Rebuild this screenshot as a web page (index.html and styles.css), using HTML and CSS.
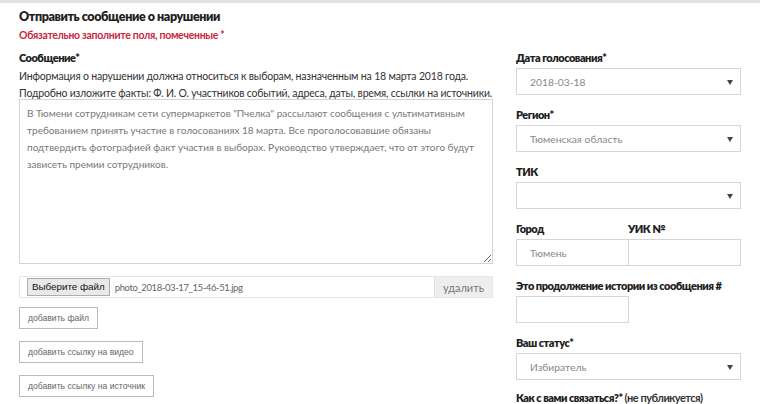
FILE: index.html
```html
<!DOCTYPE html>
<html lang="ru">
<head>
  <meta charset="UTF-8">
  <title>Отправить сообщение о нарушении</title>
  <link rel="stylesheet" href="styles.css">
</head>
<body>

<div class="page">
  <h1>Отправить сообщение о нарушении</h1>
  <p class="required-note">Обязательно заполните поля, помеченные *</p>

  <div class="form">
    <div class="col-main">
      <label class="label">Сообщение*</label>
      <p class="hint">Информация о нарушении должна относиться к выборам, назначенным на 18 марта 2018 года.<br>Подробно изложите факты: Ф. И. О. участников событий, адреса, даты, время, ссылки на источники.</p>
      <textarea class="message">В Тюмени сотрудникам сети супермаркетов "Пчелка" рассылают сообщения с ультимативным
требованием принять участие в голосованиях 18 марта. Все проголосовавшие обязаны
подтвердить фотографией факт участия в выборах. Руководство утверждает, что от этого будут
зависеть премии сотрудников.</textarea>

      <div class="file-row">
        <div class="file-pick">
          <span class="file-btn">Выберите файл</span>
          <span class="file-name">photo_2018-03-17_15-46-51.jpg</span>
        </div>
        <span class="file-del">удалить</span>
      </div>

      <div class="actions">
        <button class="btn">добавить файл</button>
        <button class="btn">добавить ссылку на видео</button>
        <button class="btn">добавить ссылку на источник</button>
      </div>
    </div>

    <div class="col-side">
      <div class="field">
        <label class="label">Дата голосования*</label>
        <div class="select">2018-03-18</div>
      </div>
      <div class="field">
        <label class="label">Регион*</label>
        <div class="select">Тюменская область</div>
      </div>
      <div class="field">
        <label class="label">ТИК</label>
        <div class="select"></div>
      </div>
      <div class="field pair">
        <div>
          <label class="label">Город</label>
          <div class="input">Тюмень</div>
        </div>
        <div>
          <label class="label">УИК №</label>
          <div class="input"></div>
        </div>
      </div>
      <div class="field">
        <label class="label">Это продолжение истории из сообщения #</label>
        <div class="input short"></div>
      </div>
      <div class="field">
        <label class="label">Ваш статус*</label>
        <div class="select">Избиратель</div>
      </div>
      <div class="field last">
        <label class="label">Как с вами связаться?* <span class="normal">(не публикуется)</span></label>
      </div>
    </div>
  </div>
</div>

</body>
</html>
```

FILE: styles.css
```css
body {
  margin: 0;
  padding: 0;
  background-color: #fff;
  font-family: "Lato", "Open Sans", sans-serif;
  color: #333;
  overflow: hidden;
}
.page {
  border-top: 3px solid #e2e2e2;
  padding: 6px 19px 0 19px;
}
h1 {
  font-size: 12.5px;
  font-weight: 800;
  letter-spacing: -0.4px;
  color: #1e1e1e;
  margin: 0;
  line-height: 16px;
}
.required-note {
  color: #c8283e;
  font-size: 10.5px;
  font-weight: bold;
  letter-spacing: -0.3px;
  margin: 2px 0 0 0;
  line-height: 16px;
}
.form {
  display: flex;
  gap: 23px;
  margin-top: 7px;
}
.col-main {
  width: 474px;
}
.col-side {
  width: 225px;
}
.label {
  display: block;
  font-size: 11px;
  font-weight: 800;
  letter-spacing: -0.5px;
  color: #1e1e1e;
  line-height: 16px;
  margin-bottom: 2px;
}
.label .normal {
  font-weight: bold;
  color: #333;
}
.hint {
  font-size: 10.5px;
  letter-spacing: -0.18px;
  line-height: 17px;
  margin: 1px 0 -3px 0;
  color: #333;
  white-space: nowrap;
}
.message {
  display: block;
  box-sizing: border-box;
  width: 474px;
  height: 165px;
  margin: 0;
  padding: 5px 7px;
  border: 1px solid #d4d4d4;
  font-family: inherit;
  font-size: 10px;
  line-height: 17px;
  color: #777;
  resize: vertical;
  white-space: pre;
  overflow: hidden;
}
.file-row {
  display: flex;
  margin-top: 12px;
  height: 22px;
  border: 1px solid #e6e6e6;
  box-sizing: border-box;
}
.file-pick {
  flex: 1;
  display: flex;
  align-items: center;
  padding-left: 7px;
}
.file-btn {
  font-family: "Liberation Sans", Arial, sans-serif;
  font-size: 9.8px;
  color: #111;
  background: #e9e9e9;
  border: 1px solid #adadad;
  padding: 2px 4px;
  line-height: 12px;
}
.file-name {
  font-size: 9.5px;
  letter-spacing: -0.4px;
  color: #666;
  margin-left: 5px;
}
.file-del {
  width: 57px;
  background: #eeeeee;
  color: #777;
  font-size: 11px;
  display: flex;
  align-items: center;
  justify-content: center;
  border-left: 1px solid #e0e0e0;
}
.actions {
  display: flex;
  flex-direction: column;
  align-items: flex-start;
  gap: 12px;
  margin-top: 9px;
}
.btn {
  background: #fff;
  border: 1px solid #bbbbbb;
  height: 22px;
  padding: 0 8px;
  font-family: "Liberation Sans", Tahoma, sans-serif;
  font-size: 8.6px;
  color: #666;
}
.field {
  margin-bottom: 12px;
}
.field.last {
  margin-top: -2px;
}
.select, .input {
  box-sizing: border-box;
  height: 27px;
  border: 1px solid #d6d6d6;
  padding: 0 13px;
  font-size: 10.3px;
  color: #888;
  display: flex;
  align-items: center;
  position: relative;
}
.select::after {
  content: "";
  position: absolute;
  right: 7px;
  top: 11px;
  border-left: 3px solid transparent;
  border-right: 3px solid transparent;
  border-top: 5px solid #444;
}
.pair {
  display: flex;
}
.pair > div {
  width: 112px;
}
.pair > div + div {
  width: 113px;
}
.pair .input {
  border-right: none;
}
.pair > div + div .input {
  border-right: 1px solid #d6d6d6;
}
.input.short {
  width: 113px;
}
```
